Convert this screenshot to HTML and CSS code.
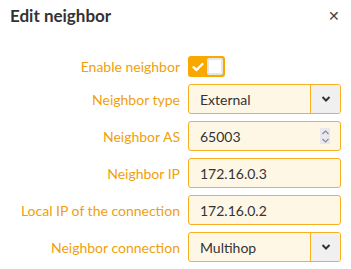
FILE: index.html
```html
<!DOCTYPE html>
<html>
<head>
<meta charset="utf-8">
<link rel="stylesheet" href="styles.css">
</head>
<body>
<div class="dialog">
  <div class="header">
    <div class="title">Edit neighbor</div>
    <div class="close">&#x2715;</div>
  </div>
  <div class="form">
    <div class="label">Enable neighbor</div>
    <div class="field">
      <div class="toggle">
        <div class="toggle-on">
          <svg width="12" height="10" viewBox="0 0 12 10"><path d="M1.5 5.2 L4.5 8 L10.5 2" fill="none" stroke="#fff" stroke-width="2.4" stroke-linecap="round" stroke-linejoin="round"/></svg>
        </div>
        <div class="toggle-knob"></div>
      </div>
    </div>

    <div class="label">Neighbor type</div>
    <div class="field">
      <div class="select">
        <span class="value">External</span>
        <span class="arrow"><svg width="10" height="6" viewBox="0 0 10 6"><path d="M1.5 1 L5 4.5 L8.5 1" fill="none" stroke="#333" stroke-width="2"/></svg></span>
      </div>
    </div>

    <div class="label">Neighbor AS</div>
    <div class="field">
      <div class="input">
        <span class="value">65003</span>
        <span class="spin"><svg width="9" height="15" viewBox="0 0 9 15"><path d="M1.5 5 L4.5 2 L7.5 5 M1.5 10 L4.5 13 L7.5 10" fill="none" stroke="#8a8a95" stroke-width="1.2"/></svg></span>
      </div>
    </div>

    <div class="label">Neighbor IP</div>
    <div class="field">
      <div class="input"><span class="value">172.16.0.3</span></div>
    </div>

    <div class="label">Local IP of the connection</div>
    <div class="field">
      <div class="input"><span class="value">172.16.0.2</span></div>
    </div>

    <div class="label">Neighbor connection</div>
    <div class="field">
      <div class="select">
        <span class="value">Multihop</span>
        <span class="arrow"><svg width="10" height="6" viewBox="0 0 10 6"><path d="M1.5 1 L5 4.5 L8.5 1" fill="none" stroke="#333" stroke-width="2"/></svg></span>
      </div>
    </div>
  </div>
</div>
</body>
</html>
```

FILE: styles.css
```css
html, body {
  margin: 0;
  padding: 0;
  background: #fff;
}
body {
  font-family: Lato, "Liberation Sans", sans-serif;
  color: #333;
}
.dialog {
  width: 351px;
  height: 269px;
  box-sizing: border-box;
}
.header {
  display: flex;
  justify-content: space-between;
  align-items: center;
  padding: 6px 11px 0 10px;
  height: 20px;
}
.title {
  font-size: 17px;
  font-weight: 700;
  color: #333;
  line-height: 20px;
}
.close {
  font-size: 14px;
  color: #444;
  line-height: 20px;
}
.form {
  display: grid;
  grid-template-columns: 172px 153px;
  column-gap: 8px;
  row-gap: 7px;
  padding: 30px 0 0 8px;
}
.label {
  text-align: right;
  font-size: 14px;
  color: #f0a00c;
  display: flex;
  align-items: center;
  justify-content: flex-end;
}
.field {
  display: flex;
  align-items: center;
}
.toggle {
  display: flex;
  width: 37px;
  height: 21px;
  background: #f8a800;
  border-radius: 3px;
  box-sizing: border-box;
  padding: 2px;
  gap: 2px;
}
.toggle-on {
  width: 15px;
  display: flex;
  align-items: center;
  justify-content: center;
}
.toggle-knob {
  flex: 1;
  background: #fff;
  border: 2px solid #e6e6e6;
  border-radius: 2px;
}
.select, .input {
  width: 153px;
  height: 30px;
  box-sizing: border-box;
  border: 1px solid #f8b020;
  border-radius: 3px;
  background: #fff7e6;
  display: flex;
  align-items: center;
  font-size: 14px;
  color: #333;
}
.value {
  flex: 1;
  padding-left: 11px;
}
.arrow {
  width: 29px;
  height: 100%;
  border-left: 1px solid #f8b020;
  background: #f0f0f0;
  display: flex;
  align-items: center;
  justify-content: center;
  border-radius: 0 2px 2px 0;
}
.spin {
  width: 10px;
  height: 16px;
  margin-right: 10px;
  background: #e8e8ee;
  display: flex;
  align-items: center;
  justify-content: center;
}
```
